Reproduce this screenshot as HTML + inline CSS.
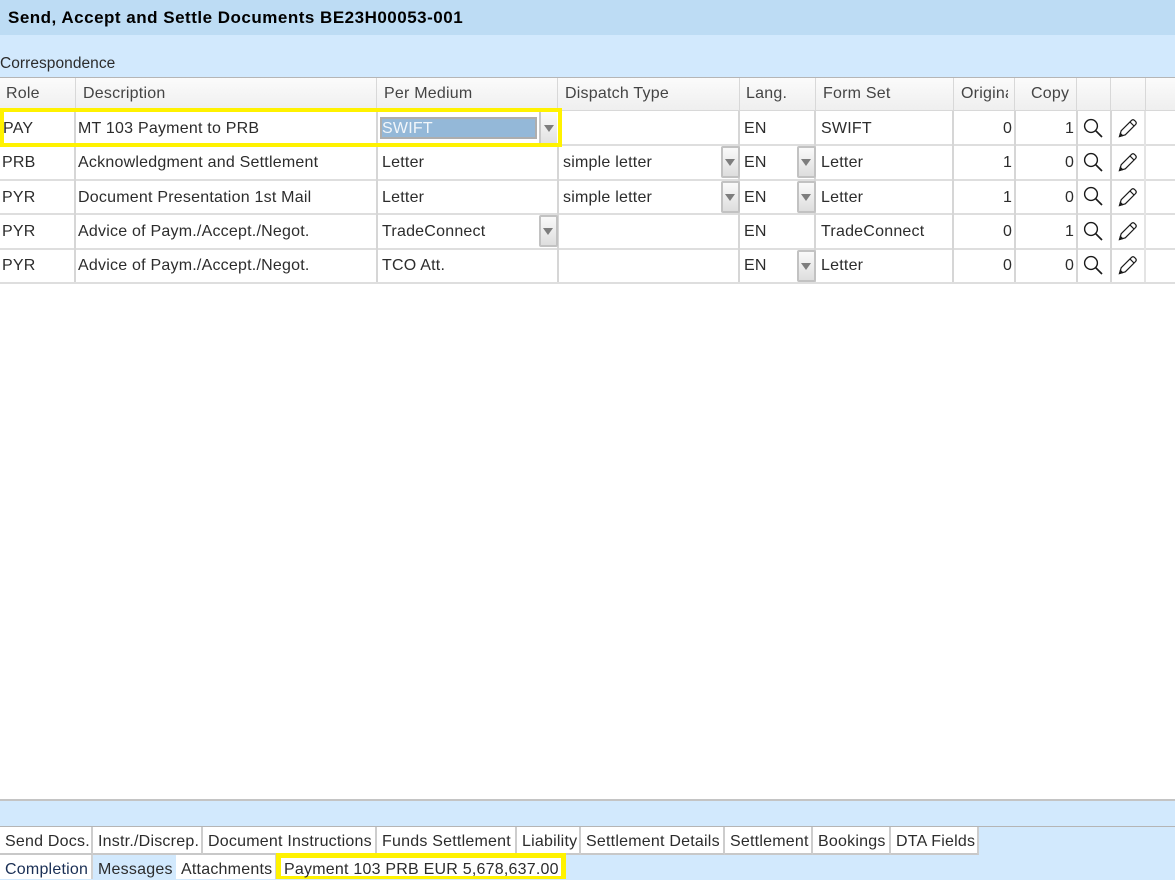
<!DOCTYPE html>
<html><head><meta charset="utf-8">
<style>
html,body{margin:0;padding:0;width:1175px;height:879px;overflow:hidden;background:#d2e9fd;font-family:"Liberation Sans",Arial,sans-serif;color:#2c2c2c;}
div,span,svg{position:absolute;box-sizing:border-box;}
.t{font-size:16px;line-height:20px;white-space:nowrap;letter-spacing:.22px;}
.h{top:84px;color:#444;}
.hs{top:78px;height:32px;width:1px;background:#d8d8d8;}
.vs{width:2px;background:#d6d6d6;}
.hl{left:0;width:1175px;height:2px;background:#dedede;}
.btn{width:19px;height:32px;border:2px solid #c2c2c2;border-radius:2px;background:linear-gradient(#fafafa,#dedede);}
.btn:after{content:"";position:absolute;left:2px;top:11px;border-left:5px solid transparent;border-right:5px solid transparent;border-top:7px solid #7d7d7d;}
.tab{top:827px;height:28px;border-right:2px solid #cdcdcd;border-bottom:2px solid #c8c8c8;background:#fff;}
.tab2{top:855px;height:24px;border-right:2px solid #d2d2d2;background:#fff;}
.tt{top:832px;}
.t2{top:860px;}
</style></head><body>
<div style="left:0;top:0;width:1175px;height:35px;background:#bddcf4"></div>
<div class="t" style="left:8px;top:8px;font-size:17px;font-weight:bold;color:#000;letter-spacing:.5px">Send, Accept and Settle Documents BE23H00053-001</div>
<div class="t" style="left:0;top:54px;font-size:15.5px;letter-spacing:.05px">Correspondence</div>

<div style="left:0;top:77px;width:1175px;height:724px;background:#fff;border-top:1px solid #b5b5b5;border-bottom:2px solid #c4c4c4"></div>
<div style="left:0;top:78px;width:1175px;height:32px;background:linear-gradient(#fbfbfb,#efefef)"></div>
<div class="hl" style="top:110px;height:1px;background:#d8d8d8"></div>

<div class="hs" style="left:75px"></div><div class="hs" style="left:376px"></div><div class="hs" style="left:557px"></div><div class="hs" style="left:739px"></div><div class="hs" style="left:815px"></div><div class="hs" style="left:953px"></div><div class="hs" style="left:1014px"></div><div class="hs" style="left:1076px"></div><div class="hs" style="left:1110px"></div><div class="hs" style="left:1145px"></div>

<div class="t h" style="left:6px">Role</div><div class="t h" style="left:83px">Description</div><div class="t h" style="left:384px">Per Medium</div><div class="t h" style="left:565px">Dispatch Type</div><div class="t h" style="left:746px">Lang.</div><div class="t h" style="left:823px">Form Set</div>
<div style="left:961px;top:84px;width:47px;height:20px;overflow:hidden"><div class="t" style="left:0;top:0;color:#444">Original</div></div>
<div class="t h" style="left:1031px">Copy</div>

<!-- row lines -->
<div class="hl" style="top:144px"></div><div class="hl" style="top:179px"></div><div class="hl" style="top:213px"></div><div class="hl" style="top:248px"></div><div class="hl" style="top:282px"></div>

<!-- column lines -->
<div class="vs" style="left:74px;top:111px;height:171px"></div>
<div class="vs" style="left:376px;top:111px;height:171px"></div>
<div class="vs" style="left:557px;top:146px;height:136px"></div>
<div class="vs" style="left:738px;top:111px;height:171px"></div>
<div class="vs" style="left:814px;top:111px;height:171px"></div>
<div class="vs" style="left:952px;top:111px;height:171px"></div>
<div class="vs" style="left:1014px;top:111px;height:171px"></div>
<div class="vs" style="left:1076px;top:111px;height:171px"></div>
<div class="vs" style="left:1110px;top:111px;height:171px"></div>
<div class="vs" style="left:1144px;top:111px;height:171px;background:#e4e4e4"></div>

<!-- row 1 -->
<div class="t" style="left:3px;top:119px">PAY</div><div class="t" style="left:78px;top:119px">MT 103 Payment to PRB</div>
<div style="left:380px;top:117px;width:157px;height:22px;background:#94b8d8;border:2px solid #aeaeae"></div>
<div class="t" style="left:382px;top:119px;color:#f2f6fa">SWIFT</div>
<div style="left:539px;top:112px;width:18px;height:31px;background:linear-gradient(#fafafa,#e2e2e2);border-left:2px solid #c8c8c8"></div>
<div style="left:544px;top:125px;width:0;height:0;border-left:5px solid transparent;border-right:5px solid transparent;border-top:7px solid #7d7d7d"></div>
<div class="t" style="left:744px;top:119px">EN</div><div class="t" style="left:821px;top:119px">SWIFT</div>
<div class="t" style="left:1003px;top:119px">0</div><div class="t" style="left:1065px;top:119px">1</div>

<!-- row 2 -->
<div class="t" style="left:2px;top:153px">PRB</div><div class="t" style="left:78px;top:153px">Acknowledgment and Settlement</div><div class="t" style="left:382px;top:153px">Letter</div><div class="t" style="left:563px;top:153px">simple letter</div>
<div class="btn" style="left:721px;top:146px"></div><div class="t" style="left:744px;top:153px">EN</div><div class="btn" style="left:797px;top:146px"></div><div class="t" style="left:821px;top:153px">Letter</div>
<div class="t" style="left:1003px;top:153px">1</div><div class="t" style="left:1065px;top:153px">0</div>

<!-- row 3 -->
<div class="t" style="left:2px;top:188px">PYR</div><div class="t" style="left:78px;top:188px">Document Presentation 1st Mail</div><div class="t" style="left:382px;top:188px">Letter</div><div class="t" style="left:563px;top:188px">simple letter</div>
<div class="btn" style="left:721px;top:181px"></div><div class="t" style="left:744px;top:188px">EN</div><div class="btn" style="left:797px;top:181px"></div><div class="t" style="left:821px;top:188px">Letter</div>
<div class="t" style="left:1003px;top:188px">1</div><div class="t" style="left:1065px;top:188px">0</div>

<!-- row 4 -->
<div class="t" style="left:2px;top:222px">PYR</div><div class="t" style="left:78px;top:222px">Advice of Paym./Accept./Negot.</div><div class="t" style="left:382px;top:222px">TradeConnect</div>
<div class="btn" style="left:539px;top:215px"></div><div class="t" style="left:744px;top:222px">EN</div><div class="t" style="left:821px;top:222px">TradeConnect</div>
<div class="t" style="left:1003px;top:222px">0</div><div class="t" style="left:1065px;top:222px">1</div>

<!-- row 5 -->
<div class="t" style="left:2px;top:256px">PYR</div><div class="t" style="left:78px;top:256px">Advice of Paym./Accept./Negot.</div><div class="t" style="left:382px;top:256px">TCO Att.</div>
<div class="t" style="left:744px;top:256px">EN</div><div class="btn" style="left:797px;top:250px"></div><div class="t" style="left:821px;top:256px">Letter</div>
<div class="t" style="left:1003px;top:256px">0</div><div class="t" style="left:1065px;top:256px">0</div>

<!-- icons -->
<svg style="left:0;top:0" width="1175" height="300" fill="none" stroke="#1a1a1a">
<defs>
<g id="s"><circle cx="8" cy="8" r="6.4" stroke-width="1.4"/><path d="M12.7 12.7L19 19" stroke-width="1.7"/></g>
<g id="p" stroke-width="1.2"><path d="M1.5 17.5L3.2 11.7L13.6 1.3Q15 .2 16.4 1.3L17.7 2.6Q18.8 4 17.7 5.4L7.3 15.8Z"/><path d="M12 3L16 7"/><path d="M1.5 17.5L2.4 14.4L4.6 16.6Z" fill="#1a1a1a"/></g>
</defs>
<use href="#s" x="1083" y="118"/><use href="#s" x="1083" y="152"/><use href="#s" x="1083" y="186"/><use href="#s" x="1083" y="221"/><use href="#s" x="1083" y="255"/>
<use href="#p" x="1118" y="119"/><use href="#p" x="1118" y="153"/><use href="#p" x="1118" y="188"/><use href="#p" x="1118" y="222"/><use href="#p" x="1118" y="256"/>
</svg>

<!-- yellow highlight -->
<div style="left:0;top:108px;width:562px;height:39px;border:4.5px solid #fff200"></div>

<!-- tabs -->
<div style="left:0;top:826px;width:1175px;height:1px;background:#b5b5b5"></div>
<div class="tab" style="left:0;width:93px"></div><div class="tab" style="left:93px;width:110px"></div><div class="tab" style="left:203px;width:174px"></div><div class="tab" style="left:377px;width:140px"></div><div class="tab" style="left:517px;width:64px"></div><div class="tab" style="left:581px;width:144px"></div><div class="tab" style="left:725px;width:88px"></div><div class="tab" style="left:813px;width:78px"></div><div class="tab" style="left:891px;width:88px"></div>
<div class="t tt" style="left:5px">Send Docs.</div><div class="t tt" style="left:98px">Instr./Discrep.</div><div class="t tt" style="left:208px">Document Instructions</div><div class="t tt" style="left:382px">Funds Settlement</div><div class="t tt" style="left:522px">Liability</div><div class="t tt" style="left:586px">Settlement Details</div><div class="t tt" style="left:730px">Settlement</div><div class="t tt" style="left:818px">Bookings</div><div class="t tt" style="left:896px">DTA Fields</div>

<div class="tab2" style="left:0;width:93px"></div>
<div class="tab2" style="left:93px;width:83px;background:#d2e9fd;border-right:none"></div>
<div class="tab2" style="left:176px;width:101px"></div>
<div style="left:276px;top:853px;width:290px;height:26px;background:#fff;border:5px solid #fff200;border-bottom:3px solid #fff200"></div>
<div class="t t2" style="left:5px;color:#1a2f55">Completion</div><div class="t t2" style="left:98px">Messages</div><div class="t t2" style="left:181px">Attachments</div><div class="t t2" style="left:284px">Payment 103 PRB EUR 5,678,637.00</div>
</body></html>
